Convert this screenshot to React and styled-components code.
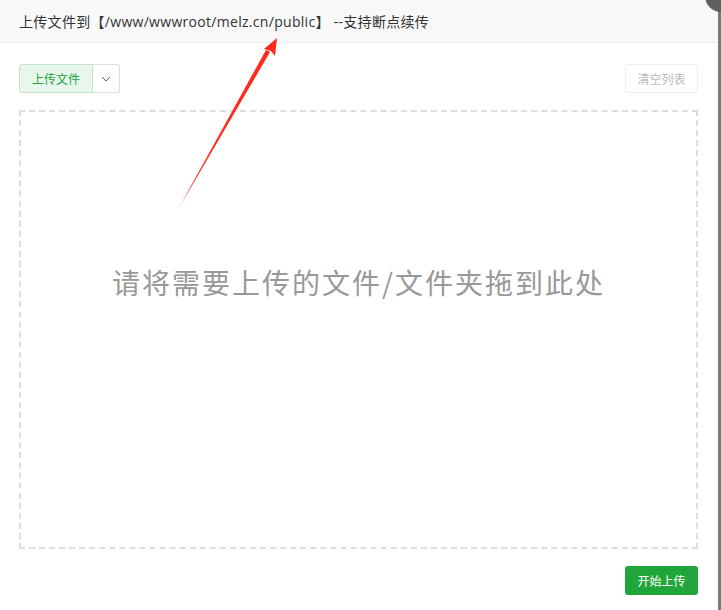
import React from 'react'
import styled, { createGlobalStyle } from 'styled-components'

const GlobalStyle = createGlobalStyle`
    html, body {
        margin: 0;
        padding: 0;
        background: #fff;
        font-family: "Open Sans", "Noto Sans CJK SC", sans-serif;
    }
`

const Page = styled.div`
    position: relative;
    display: flex;
    width: 721px;
    height: 610px;
    overflow: hidden;
`

const Dialog = styled.div`
    width: 718px;
    display: flex;
    flex-direction: column;
    background: #fff;
`

const Edge = styled.div`
    width: 3px;
    background: #7a7a7a;
`

const Header = styled.div`
    height: 42px;
    display: flex;
    align-items: center;
    padding: 0 19px;
    background: #f8f8f8;
    border-bottom: 1px solid #eee;
    color: #333;
    font-size: 14px;
    letter-spacing: 0.3px;
`

const Body = styled.div`
    display: flex;
    flex-direction: column;
    padding: 21px 20px 0 19px;
`

const Toolbar = styled.div`
    display: flex;
    justify-content: space-between;
    height: 29px;
`

const SplitButton = styled.div`
    display: flex;
`

const UploadButton = styled.div`
    width: 72px;
    display: flex;
    align-items: center;
    justify-content: center;
    background: #e8f6eb;
    border: 1px solid #bfe3c6;
    border-radius: 3px 0 0 3px;
    color: #20a53a;
    font-size: 12px;
`

const DropButton = styled.div`
    width: 26px;
    display: flex;
    align-items: center;
    justify-content: center;
    border: 1px solid #ddd;
    border-left: none;
    border-radius: 0 3px 3px 0;
`

const ClearButton = styled.div`
    width: 71px;
    display: flex;
    align-items: center;
    justify-content: center;
    border: 1px solid #eee;
    border-radius: 3px;
    color: #bbb;
    font-size: 12px;
`

const DropZone = styled.div`
    margin-top: 17px;
    height: 439px;
    border: 2px dashed #ddd;
    display: flex;
    justify-content: center;
    padding-top: 150px;
    box-sizing: border-box;
    color: #999;
    font-size: 28px;
    letter-spacing: 2px;
    font-family: "Noto Sans CJK SC", sans-serif;
`

const Footer = styled.div`
    display: flex;
    justify-content: flex-end;
    margin-top: 17px;
`

const StartButton = styled.div`
    width: 73px;
    height: 29px;
    display: flex;
    align-items: center;
    justify-content: center;
    background: #20a53a;
    border-radius: 3px;
    color: #fff;
    font-size: 12px;
`

const CloseCircle = styled.div`
    position: absolute;
    top: -20px;
    right: -16px;
    width: 32px;
    height: 32px;
    border-radius: 50%;
    background: #5f5f5f;
`

const Arrow = styled.svg`
    position: absolute;
    left: 0;
    top: 0;
    pointer-events: none;
`

export default function App() {
    return (
        <Page>
            <GlobalStyle />
            <Dialog>
                <Header>上传文件到【/www/wwwroot/melz.cn/public】 --支持断点续传</Header>
                <Body>
                    <Toolbar>
                        <SplitButton>
                            <UploadButton>上传文件</UploadButton>
                            <DropButton>
                                <svg width="10" height="6" viewBox="0 0 10 6">
                                    <path d="M1 1 L5 5 L9 1" fill="none" stroke="#666" strokeWidth="1" />
                                </svg>
                            </DropButton>
                        </SplitButton>
                        <ClearButton>清空列表</ClearButton>
                    </Toolbar>
                    <DropZone>请将需要上传的文件/文件夹拖到此处</DropZone>
                    <Footer>
                        <StartButton>开始上传</StartButton>
                    </Footer>
                </Body>
            </Dialog>
            <Edge />
            <CloseCircle />
            {/* red annotation arrow */}
            <Arrow width="721" height="610" viewBox="0 0 721 610">
                <defs>
                    <linearGradient id="fade" x1="176" y1="213" x2="270" y2="50" gradientUnits="userSpaceOnUse">
                        <stop offset="0" stopColor="#ff2a1a" stopOpacity="0.2" />
                        <stop offset="0.15" stopColor="#ff2a1a" stopOpacity="1" />
                        <stop offset="1" stopColor="#ff2a1a" />
                    </linearGradient>
                </defs>
                <polygon points="176,213 266,50 270,52" fill="url(#fade)" />
                <polygon points="277,38 275,56 271,51 264,49" fill="#ff2a1a" />
            </Arrow>
        </Page>
    )
}
